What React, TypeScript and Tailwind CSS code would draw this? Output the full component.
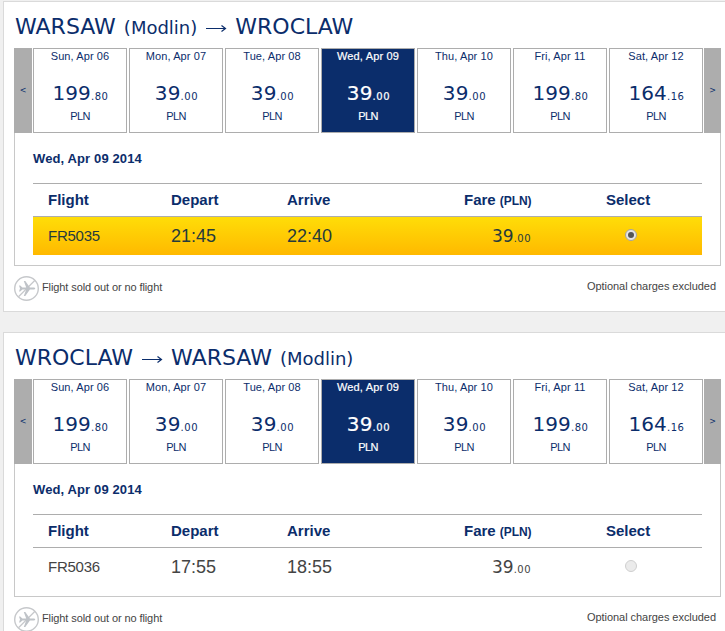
import { useState } from "react";

type Day = { date: string; whole: string; cents: string };

type Trip = {
  from: string;
  fromNote?: string;
  to: string;
  toNote?: string;
  flight: string;
  depart: string;
  arrive: string;
};

const days: Day[] = [
  { date: "Sun, Apr 06", whole: "199", cents: ".80" },
  { date: "Mon, Apr 07", whole: "39", cents: ".00" },
  { date: "Tue, Apr 08", whole: "39", cents: ".00" },
  { date: "Wed, Apr 09", whole: "39", cents: ".00" },
  { date: "Thu, Apr 10", whole: "39", cents: ".00" },
  { date: "Fri, Apr 11", whole: "199", cents: ".80" },
  { date: "Sat, Apr 12", whole: "164", cents: ".16" },
];

const trips: Trip[] = [
  { from: "WARSAW", fromNote: "(Modlin)", to: "WROCLAW", flight: "FR5035", depart: "21:45", arrive: "22:40" },
  { from: "WROCLAW", to: "WARSAW", toNote: "(Modlin)", flight: "FR5036", depart: "17:55", arrive: "18:55" },
];

function Arrow() {
  return (
    <svg width="22" height="9" viewBox="0 0 22 9" className="mt-[4px] mr-[8px] ml-[8px]" fill="none" stroke="#0b2d6b">
      <path d="M1 4.5H20" />
      <path d="M16.5 1.5L20.5 4.5L16.5 7.5" strokeWidth="1.2" />
    </svg>
  );
}

function NoFlightIcon() {
  return (
    <svg width="26" height="26" viewBox="0 0 26 26" fill="none" className="shrink-0">
      <circle cx="12.5" cy="12.5" r="11.8" stroke="#c6c8cb" strokeWidth="1.4" />
      <path d="M4.5 20.8L21 4.2" stroke="#c6c8cb" strokeWidth="1.3" />
      <path
        d="M5 9.5h1.2l2.2 2h3.8L9.8 5h1.5l4.6 6.5h3.3c1.2 0 2 .4 2 1s-.8 1-2 1h-3.3l-4.6 6.5H9.8l2.4-6.5H8.4l-2.2 2H5l1-3z"
        fill="#bfc3c8"
      />
    </svg>
  );
}

function DayCell({ day, active, onClick }: { day: Day; active: boolean; onClick: () => void }) {
  return (
    <button
      onClick={onClick}
      className={`flex h-[85px] w-[94px] shrink-0 flex-col items-center border border-[#adadad] text-[11px] ${
        active ? "bg-[#0b2d6b] text-white [-webkit-text-stroke:0.2px_white]" : "bg-white text-[#0b2d6b]"
      }`}
    >
      <span className={active ? "h-[15px] leading-[14px] tracking-[0.15px]" : "h-[15px] leading-[14px] tracking-[0.1px]"}>
        {day.date}
      </span>
      <span className="mt-[16px] ml-px h-[26px] font-['DejaVu_Sans'] text-[20px] leading-[26px] tracking-[0.1px]">
        {day.whole}
        <span className="text-[10px] tracking-[0.6px]">{day.cents}</span>
      </span>
      <span className="mt-[3px] leading-[14px] tracking-[-0.6px]">PLN</span>
    </button>
  );
}

function TripCard({ trip, selected }: { trip: Trip; selected: boolean }) {
  const [activeDay, setActiveDay] = useState(3);

  return (
    <section className="h-[311px] w-[740px] border border-[#dadada] bg-white pl-[10px]">
      <h2 className="flex h-[46px] items-center pt-[3px] pl-px font-['DejaVu_Sans'] text-[22px] text-[#0b2d6b]">
        <span>{trip.from}</span>
        {trip.fromNote && <span className="mt-px ml-[8px] text-[18px]">{trip.fromNote}</span>}
        <Arrow />
        <span>{trip.to}</span>
        {trip.toNote && <span className="mt-px ml-[8px] text-[18px]">{trip.toNote}</span>}
      </h2>

      <div className="h-[218px] w-[707px] border-b border-[#c8c8c8]">
        <div className="flex">
          <button className="mr-px h-[85px] w-[18px] bg-[#adadad] font-['DejaVu_Sans'] text-[8px] text-[#0b2d6b]">&lt;</button>
          <div className="flex gap-[2px]">
            {days.map((day, i) => (
              <DayCell key={day.date} day={day} active={i === activeDay} onClick={() => setActiveDay(i)} />
            ))}
          </div>
          <button className="ml-px h-[85px] w-[17px] bg-[#adadad] font-['DejaVu_Sans'] text-[8px] text-[#0b2d6b]">&gt;</button>
        </div>

        <div className="h-[132px] border-x border-[#c8c8c8] pr-[18px] pl-[18px]">
          <p className="h-[50px] pt-[17px] text-[13px] leading-[18px] font-bold text-[#0b2d6b]">
            <span className="tracking-[0.12px]">Wed, Apr 09 2014</span>
          </p>
          <div className="grid h-[34px] grid-cols-[123px_116px_177px_142px_1fr] items-center border-y border-[#adadad] pl-[15px] text-[15px] font-bold text-[#0b2d6b]">
            <span>Flight</span>
            <span>Depart</span>
            <span>Arrive</span>
            <span>
              Fare <span className="text-[12px] tracking-[-0.1px]">(PLN)</span>
            </span>
            <span>Select</span>
          </div>
          <div
            className={`grid h-[38px] grid-cols-[123px_116px_205px_133px_1fr] items-center pl-[15px] text-[18px] ${
              selected ? "bg-linear-to-b from-[#ffdd08] to-[#ffb900] text-[#263a3c]" : "text-[#444]"
            }`}
          >
            <span className="text-[15px] tracking-[-0.25px]">{trip.flight}</span>
            <span>{trip.depart}</span>
            <span>{trip.arrive}</span>
            <span className="pt-[2px] font-['DejaVu_Sans'] text-[17px]">
              39<span className="text-[10px] tracking-[0.5px]">.00</span>
            </span>
            <span
              className={`-mt-[3px] flex size-3 items-center justify-center rounded-full border ${
                selected ? "border-[#a8a49a] bg-[#e4e4e4]" : "border-[#cfcfcf] bg-[#ebebeb]"
              }`}
            >
              {selected && <span className="size-[6px] rounded-full bg-[#555]" />}
            </span>
          </div>
        </div>
      </div>

      <div className="flex h-[46px] w-[702px] justify-between pt-[10px] text-[11px] text-[#444]">
        <div className="flex">
          <NoFlightIcon />
          <span className="ml-[2px] pt-[4px] leading-[14px] tracking-[-0.1px]">Flight sold out or no flight</span>
        </div>
        <span className="pt-[3px] leading-[14px] tracking-[-0.05px]">Optional charges excluded</span>
      </div>
    </section>
  );
}

export default function App() {
  return (
    <main className="flex h-[631px] w-[725px] flex-col gap-5 overflow-hidden bg-[#f0f0f0] pt-px pl-[3px] font-['Liberation_Sans',Arial,sans-serif]">
      {trips.map((trip, i) => (
        <TripCard key={trip.flight} trip={trip} selected={i === 0} />
      ))}
    </main>
  );
}
